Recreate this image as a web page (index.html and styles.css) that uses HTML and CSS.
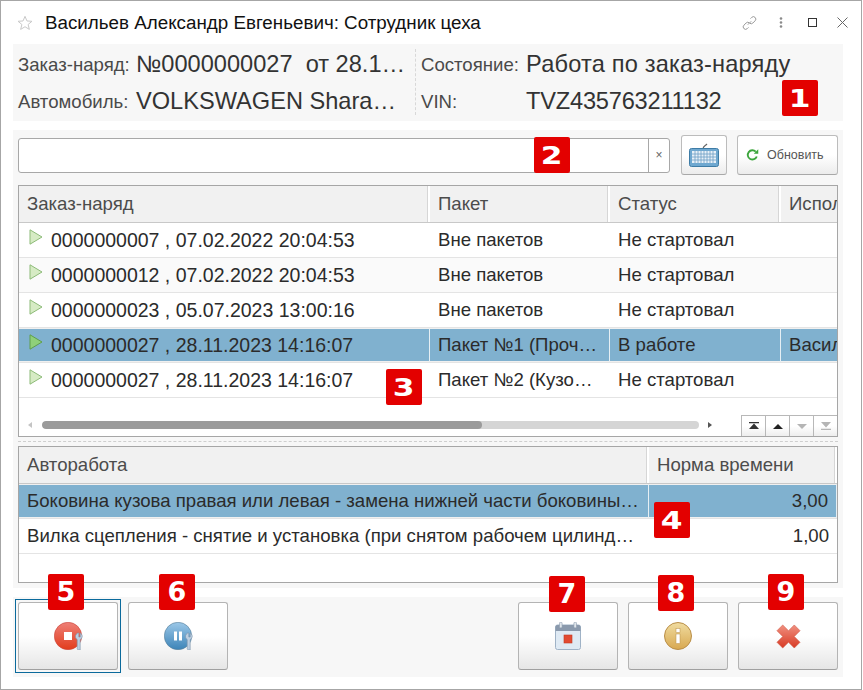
FILE: index.html
```html
<!DOCTYPE html>
<html lang="ru">
<head>
<meta charset="utf-8">
<title>Сотрудник цеха</title>
<link rel="stylesheet" href="styles.css">
</head>
<body>
<div class="window">
  <header class="titlebar">
    <svg class="star" width="16" height="16" viewBox="0 0 18 18"><path d="M9 1.500l2.200 5.200 5.600.4-4.300 3.600 1.400 5.500L9 13.200l-4.900 3 1.400-5.500L1.200 7.100l5.600-.4z" fill="#fff" stroke="#c8c8c8" stroke-width="1.100"/></svg>
    <h1 class="title">Васильев Александр Евгеньевич: Сотрудник цеха</h1>
    <div class="winbtns">
      <svg width="17" height="16" viewBox="0 0 16 16" fill="none" stroke="#9a9a9a" stroke-width="1"><path d="M6.300 9.700l3.400-3.400M9 3.600l1.200-1.200a2.400 2.400 0 0 1 3.400 3.400l-2.200 2.200a2.400 2.400 0 0 1-3.200.2M7 12.400l-1.200 1.200a2.400 2.400 0 0 1-3.400-3.400l2.200-2.200a2.400 2.400 0 0 1 3.200-.2"/></svg>
      <svg width="4" height="11" viewBox="0 0 4 11" fill="#8a8a8a"><circle cx="2" cy="1.500" r="1.300"/><circle cx="2" cy="5.500" r="1.300"/><circle cx="2" cy="9.500" r="1.300"/></svg>
      <svg width="9" height="9" viewBox="0 0 9 9" fill="none" stroke="#333"><rect x=".5" y=".5" width="8" height="8"/></svg>
      <svg width="11" height="11" viewBox="0 0 11 11" fill="none" stroke="#666"><path d="M.5.5l10 10M10.500.5l-10 10"/></svg>
    </div>
  </header>

  <section class="info">
    <div class="info-col info-left">
      <div class="info-row"><span class="lbl lbl-l">Заказ-наряд:</span><span class="val">№0000000027&nbsp; от 28.1…</span></div>
      <div class="info-row"><span class="lbl lbl-l">Автомобиль:</span><span class="val">VOLKSWAGEN Shara…</span></div>
    </div>
    <div class="info-col">
      <div class="info-row"><span class="lbl lbl-r">Состояние:</span><span class="val val-wide">Работа по заказ-наряду</span></div>
      <div class="info-row"><span class="lbl lbl-r">VIN:</span><span class="val val-tight">TVZ435763211132</span></div>
    </div>
  </section>

  <section class="main">
    <div class="toolbar">
      <div class="search"><div class="search-input"></div><div class="search-clear">×</div></div>
      <button class="btn btn-kbd" type="button">
        <svg width="30" height="24" viewBox="0 0 30 24"><path d="M14 6c0-3 2-3 4-5" fill="none" stroke="#666" stroke-width="1.200"/><rect x=".5" y="5.500" width="29" height="18" rx="2" fill="#6fa8d0" stroke="#3e7ca6"/><rect x="3" y="8" width="24" height="12" fill="#e8f1f8"/><path d="M3 11h24M3 14h24M3 17h24M6 8v12M9 8v12M12 8v12M15 8v12M18 8v12M21 8v12M24 8v12" stroke="#6d9fc4" stroke-width=".8"/></svg>
      </button>
      <button class="btn btn-refresh" type="button">
        <svg width="13" height="14" viewBox="0 0 14 14" fill="none"><path d="M11.600 8.600A5 5 0 1 1 10.500 3.400" stroke="#3ca53c" stroke-width="2"/><path d="M8.400 5.600h4.800V.8z" fill="#3ca53c"/></svg>
        <span>Обновить</span>
      </button>
    </div>

    <div class="table t1">
      <div class="row head c1"><div>Заказ-наряд</div><div>Пакет</div><div>Статус</div><div>Испол</div></div>
      <div class="row c1"><div class="first"><svg class="play" width="14" height="16" viewBox="0 0 14 16"><path d="M1 .8l12 7.200-12 7.200z" fill="#d6ebc4" stroke="#8dbb78"/></svg>0000000007 , 07.02.2022 20:04:53</div><div>Вне пакетов</div><div>Не стартовал</div><div></div></div>
      <div class="row alt c1"><div class="first"><svg class="play" width="14" height="16" viewBox="0 0 14 16"><path d="M1 .8l12 7.200-12 7.200z" fill="#d6ebc4" stroke="#8dbb78"/></svg>0000000012 , 07.02.2022 20:04:53</div><div>Вне пакетов</div><div>Не стартовал</div><div></div></div>
      <div class="row c1"><div class="first"><svg class="play" width="14" height="16" viewBox="0 0 14 16"><path d="M1 .8l12 7.200-12 7.200z" fill="#d6ebc4" stroke="#8dbb78"/></svg>0000000023 , 05.07.2023 13:00:16</div><div>Вне пакетов</div><div>Не стартовал</div><div></div></div>
      <div class="row sel c1"><div class="first"><svg class="play" width="14" height="16" viewBox="0 0 14 16"><path d="M1 .8l12 7.200-12 7.200z" fill="#8fd07a" stroke="#5f9e4c"/></svg>0000000027 , 28.11.2023 14:16:07</div><div>Пакет №1 (Проч…</div><div>В работе</div><div>Васил</div></div>
      <div class="row c1"><div class="first"><svg class="play" width="14" height="16" viewBox="0 0 14 16"><path d="M1 .8l12 7.200-12 7.200z" fill="#d6ebc4" stroke="#8dbb78"/></svg>0000000027 , 28.11.2023 14:16:07</div><div>Пакет №2 (Кузо…</div><div>Не стартовал</div><div></div></div>
      <div class="scroll">
        <span class="arrow arrow-l"></span>
        <div class="track"><div class="thumb"></div></div>
        <span class="arrow arrow-r"></span>
        <div class="pager">
          <div class="page"><svg width="10" height="8" viewBox="0 0 10 8" fill="#333"><path d="M0 0h10v1.200H0zM5 1.500l5 5.500H0z"/></svg></div>
          <div class="page"><svg width="10" height="5" viewBox="0 0 10 5" fill="#222"><path d="M5 0l5 5H0z"/></svg></div>
          <div class="page"><svg width="10" height="5" viewBox="0 0 10 5" fill="#b5b5b5"><path d="M5 5L0 0h10z"/></svg></div>
          <div class="page"><svg width="10" height="8" viewBox="0 0 10 8" fill="#b5b5b5"><path d="M5 5.500L0 0h10zM0 6.800h10V8H0z"/></svg></div>
        </div>
      </div>
    </div>

    <div class="splitter"></div>

    <div class="table t2">
      <div class="row head c2"><div>Авторабота</div><div>Норма времени</div></div>
      <div class="row sel c2"><div>Боковина кузова правая или левая - замена нижней части боковины…</div><div class="num">3,00</div></div>
      <div class="row c2"><div>Вилка сцепления - снятие и установка (при снятом рабочем цилинд…</div><div class="num">1,00</div></div>
    </div>
  </section>

  <footer class="actions">
    <div class="focus"><button class="act" type="button">
      <svg class="wrenched" width="30" height="28" viewBox="0 0 30 28"><defs><linearGradient id="gr" x1="0" y1="0" x2="0" y2="1"><stop offset="0" stop-color="#ee8078"/><stop offset="1" stop-color="#e23c1c"/></linearGradient></defs><circle cx="14" cy="14" r="13.700" fill="url(#gr)" stroke="#c9463c" stroke-width=".6"/><rect x="10" y="10" width="8" height="8" fill="#fff"/><path d="M24.800 11v4h1.400v-4c1.800 1 2.600 3.200 1.600 5-.4.800-1 1.200-1.600 1.500V28h-1.400c-1 0-1.600-.6-1.600-1.500v-9c-1.800-1-2.400-3.500-.9-5.300.4-.5.900-.9 1.500-1.200z" fill="#bccfe2" stroke="#7e93aa" stroke-width=".6"/></svg>
    </button></div>
    <button class="act" type="button">
      <svg class="wrenched" width="30" height="28" viewBox="0 0 30 28"><defs><linearGradient id="gb" x1="0" y1="0" x2="0" y2="1"><stop offset="0" stop-color="#9cc8e8"/><stop offset="1" stop-color="#3c84b8"/></linearGradient></defs><circle cx="14" cy="14" r="13.700" fill="url(#gb)" stroke="#5b7f98" stroke-width=".6"/><path d="M10 9.500h3v9h-3zM15 9.500h3v9h-3z" fill="#fff"/><path d="M24.800 11v4h1.400v-4c1.800 1 2.600 3.200 1.600 5-.4.800-1 1.200-1.600 1.500V28h-1.400c-1 0-1.600-.6-1.600-1.500v-9c-1.800-1-2.400-3.500-.9-5.300.4-.5.900-.9 1.500-1.200z" fill="#bccfe2" stroke="#7e93aa" stroke-width=".6"/></svg>
    </button>
    <div class="grow"></div>
    <button class="act" type="button">
      <svg width="26" height="28" viewBox="0 0 26 28"><rect x=".5" y="3" width="25" height="24.500" rx="2" fill="#dfeaf4" stroke="#9fb2c6"/><path d="M.5 5a2 2 0 0 1 2-2h21a2 2 0 0 1 2 2v4H.5z" fill="#8a99ac"/><rect x="4.500" y="0" width="2.600" height="6" rx="1.300" fill="#dfe5ea" stroke="#8a99ac" stroke-width=".6"/><rect x="18.900" y="0" width="2.600" height="6" rx="1.300" fill="#dfe5ea" stroke="#8a99ac" stroke-width=".6"/><rect x="9" y="13" width="8" height="8" fill="#e24a32" stroke="#c23a24" stroke-width=".6"/></svg>
    </button>
    <button class="act" type="button">
      <svg width="28" height="28" viewBox="0 0 28 28"><defs><linearGradient id="gy" x1="0" y1="0" x2="0" y2="1"><stop offset="0" stop-color="#f0dca0"/><stop offset="1" stop-color="#d8a850"/></linearGradient></defs><circle cx="14" cy="14" r="13.500" fill="url(#gy)" stroke="#b98e48"/><rect x="12" y="6.500" width="4" height="4" fill="#fff" stroke="#b98e48" stroke-width=".5"/><rect x="12" y="12" width="4" height="9.500" fill="#fff" stroke="#b98e48" stroke-width=".5"/></svg>
    </button>
    <button class="act" type="button">
      <svg width="25" height="25" viewBox="0 0 26 26"><defs><linearGradient id="gx" x1="0" y1="0" x2="0" y2="1"><stop offset="0" stop-color="#f09080"/><stop offset="1" stop-color="#d83a24"/></linearGradient></defs><path d="M7 1l6 6 6-6 6 6-6 6 6 6-6 6-6-6-6 6-6-6 6-6-6-6z" fill="url(#gx)" stroke="#cf5a48" stroke-width=".6"/></svg>
    </button>
  </footer>

  <span class="badge b1"><span class="wide">1</span></span>
  <span class="badge b2"><span class="wide">2</span></span>
  <span class="badge b3"><span class="wide">3</span></span>
  <span class="badge b4"><span class="wide">4</span></span>
  <span class="badge b5">5</span>
  <span class="badge b6">6</span>
  <span class="badge b7">7</span>
  <span class="badge b8">8</span>
  <span class="badge b9">9</span>
</div>
</body>
</html>
```

FILE: styles.css
```css
* { box-sizing: border-box; }
html, body { margin: 0; padding: 0; background: #fff; }
body { font-family: "Liberation Sans", Arial, sans-serif; color: #333; }

.window {
  position: relative;
  width: 862px;
  height: 690px;
  border: 1px solid #a6a6a6;
  display: flex;
  flex-direction: column;
  padding: 0 18px 0 12px;
  overflow: hidden;
}

.titlebar { height: 43px; flex: none; display: flex; align-items: center; padding: 0 0 0 4px; }
.star { margin-right: 12px; }
.title { margin: 0; font-size: 18.800px; font-weight: 400; color: #111; white-space: nowrap; flex: 1; }
.winbtns { display: flex; align-items: center; margin-right: -5px; }
.winbtns svg:nth-child(1) { margin-right: 21px; }
.winbtns svg:nth-child(2) { margin-right: 25px; }
.winbtns svg:nth-child(3) { margin-right: 20px; }

.info {
  height: 77px;
  flex: none;
  background: #f7f7f7;
  display: flex;
  padding: 4px 0 3px;
}
.info-col { display: flex; flex-direction: column; justify-content: space-between; }
.info-left { width: 403px; padding-left: 5px; position: relative; }
.info-left::after {
  content: "";
  position: absolute;
  right: 0;
  top: 1px;
  bottom: 3px;
  border-right: 1px dashed #d8d8d8;
}
.info-col:last-child { padding-left: 5px; }
.info-row { height: 33px; display: flex; align-items: center; white-space: nowrap; }
.lbl { font-size: 18.600px; color: #4a4a4a; }
.lbl-l { width: 118px; }
.lbl-r { width: 105px; }
.val { font-size: 23.600px; color: #333; }
.val-wide { letter-spacing: .18px; }
.val-tight { letter-spacing: -.2px; }

.main {
  margin-top: 9px;
  height: 458px;
  flex: none;
  background: #f7f7f7;
  padding: 5px;
  display: flex;
  flex-direction: column;
}

.toolbar { height: 42px; flex: none; display: flex; align-items: flex-start; }
.search {
  width: 652px;
  height: 35px;
  margin-top: 3px;
  display: flex;
  background: #fff;
  border: 1px solid #a8a8a8;
  border-radius: 3px;
}
.search-input { flex: 1; }
.search-clear {
  width: 21px;
  border-left: 1px solid #a8a8a8;
  font-size: 12px;
  line-height: 33px;
  text-align: center;
  color: #666;
}
.btn {
  height: 40px;
  border: 1px solid #bcbcbc;
  border-bottom-color: #a8a8a8;
  border-radius: 3px;
  background: linear-gradient(#fff 50%, #ececec);
  padding: 0;
  font-family: inherit;
  display: flex;
  align-items: center;
  justify-content: center;
}
.btn-kbd { width: 46px; margin-left: 11px; }
.btn-refresh {
  width: 101px;
  margin-left: 10px;
  justify-content: flex-start;
  padding-left: 8px;
  gap: 8px;
  font-size: 12.500px;
  color: #555;
}

.table { background: #fff; border: 1px solid #a6a6a6; overflow: hidden; flex: none; }
.t1 { height: 252px; margin-top: 8px; display: flex; flex-direction: column; }
.t2 { height: 137px; }
.splitter { height: 9px; flex: none; position: relative; }
.splitter::after {
  content: "";
  position: absolute;
  left: 0;
  right: 0;
  top: 4px;
  border-top: 1px dashed #cfcfcf;
}

.row {
  display: grid;
  height: 35px;
  flex: none;
  align-items: stretch;
  font-size: 18.600px;
  color: #2b2b2b;
  border-bottom: 1px solid #e4e4e4;
  white-space: nowrap;
}
.c1 { grid-template-columns: 411px 180px 171px 60px; width: 822px; }
.c2 { grid-template-columns: 630px 1fr; }
.row > div {
  display: flex;
  align-items: center;
  padding-left: 8px;
  overflow: hidden;
  border-right: 1px solid transparent;
}
.row.head {
  height: 37px;
  background: #f1f1f1;
  color: #4c4c4c;
  border-bottom: 1px solid #c8c8c8;
}
.row.head > div { border-right: 2px solid #fff; box-shadow: inset -1px 0 0 #d6d6d6; }
.row.alt { background: #fafafa; }
.row.sel {
  background: #80b1cf;
  box-shadow: inset 0 1px 0 #f0f0f0, inset 0 -1px 0 #f0f0f0;
}
.row.sel > div { border-right: 1px solid #e6eff4; }
.c1 .first { gap: 8px; padding-left: 10px; font-size: 19.500px; }
.play { margin-top: -6px; }
.row .num { justify-content: flex-end; padding-right: 8px; border-right: 0; }

.scroll { flex: 1; display: flex; align-items: center; position: relative; }
.arrow { width: 0; height: 0; border-top: 3px solid transparent; border-bottom: 3px solid transparent; margin-top: 15px; }
.arrow-l { border-right: 4px solid #c4c4c4; margin-left: 9px; }
.arrow-r { border-left: 4px solid #555; margin-left: 9px; }
.track { width: 657px; height: 8px; margin-left: 10px; background: #d5d5d5; border-radius: 4px; margin-top: 15px; overflow: hidden; }
.thumb { width: 440px; height: 100%; background: #9b9b9b; border-radius: 4px; }
.pager {
  display: flex;
  height: 21px;
  margin-left: auto;
  align-self: flex-end;
}
.page {
  width: 24px;
  border: 1px solid #b8b8b8;
  border-width: 1px 0 0 1px;
  background: linear-gradient(#fff 50%, #eee);
  display: flex;
  align-items: center;
  justify-content: center;
}

.actions {
  margin-top: 9px;
  height: 80px;
  flex: none;
  background: #f7f7f7;
  display: flex;
  align-items: flex-start;
  gap: 10px;
  padding: 5px 5px 0;
}
.grow { flex: 1; }
.act {
  width: 100px;
  height: 68px;
  flex: none;
  padding: 0;
  border: 1px solid #b4b4b4;
  border-bottom-color: #a0a0a0;
  border-radius: 3px;
  background: linear-gradient(#fff 50%, #e6e6e6);
  display: flex;
  align-items: center;
  justify-content: center;
}
.wrenched { margin-left: 2px; }
.focus { position: relative; width: 100px; height: 68px; flex: none; }
.focus::before {
  content: "";
  position: absolute;
  inset: -3px;
  border: 1px solid #0b6a9c;
}
.focus .act { position: relative; }

.badge {
  position: absolute;
  width: 36px;
  height: 36px;
  background: #e30000;
  border-radius: 2px;
  color: #fff;
  font-family: "DejaVu Sans", sans-serif;
  font-weight: 700;
  font-size: 27px;
  line-height: 36px;
  text-align: center;
}
.wide { display: inline-block; transform: scaleX(1.250); font-size: 25px; }
.b1 { left: 781px; top: 79px; }
.b2 { left: 533px; top: 136px; }
.b3 { left: 385px; top: 368px; }
.b4 { left: 653px; top: 501px; }
.b5 { left: 47px; top: 573px; }
.b6 { left: 158px; top: 573px; }
.b7 { left: 548px; top: 575px; }
.b8 { left: 657px; top: 574px; }
.b9 { left: 767px; top: 573px; }
```
